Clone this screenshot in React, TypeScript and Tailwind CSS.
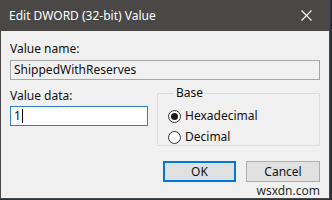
const font = { fontFamily: '"Noto Sans", "Open Sans", sans-serif' };

const Radio = ({ checked, label }: { checked?: boolean; label: string }) => (
  <label className="flex items-center gap-[4px] h-[16px]">
    <span className="flex items-center justify-center w-[13px] h-[13px] rounded-full border border-[#333333] bg-white">
      {checked && <span className="w-[7px] h-[7px] rounded-full bg-[#1a1a1a]" />}
    </span>
    <span>{label}</span>
  </label>
);

export default function App() {
  return (
    <div className="w-[332px] h-[200px] flex bg-[#2e3236] overflow-hidden text-[12px] text-[#111111]" style={font}>
      <div className="relative w-[330px] h-[199px] flex flex-col border-l border-r border-b border-[#4a4846]">
        <div className="h-[31px] flex items-center justify-between bg-[#4a4846] text-white">
          <span className="pl-[8px] text-[12px]">Edit DWORD (32-bit) Value</span>
          <span className="w-[46px] h-full flex items-center justify-center">
            <svg width="11" height="11" viewBox="0 0 11 11">
              <path d="M0.5 0.5 L10.5 10.5 M10.5 0.5 L0.5 10.5" stroke="#ffffff" strokeWidth="1.1" />
            </svg>
          </span>
        </div>

        <div className="flex-1 flex flex-col bg-[#f0f0f0] px-[9px] pt-[10px]">
          <div className="leading-[16px]">Value name:</div>
          <div className="mt-[3px] h-[20px] flex items-center px-[3px] border border-[#a5a5a5] bg-[#f0f0f0]">
            ShippedWithReserves
          </div>

          <div className="mt-[6px] flex gap-[9px]">
            <div className="w-[138px] flex flex-col">
              <div className="leading-[16px] pt-[2px]">Value data:</div>
              <div className="mt-[2px] h-[20px] flex items-center px-[3px] border border-[#2f7fc4] bg-white">
                <span>1</span>
                <span className="w-[1px] h-[14px] bg-black ml-[1px]" />
              </div>
            </div>
            <fieldset className="flex-1 h-[60px] border border-[#dcdcdc] rounded-[1px] px-[10px] pt-[8px]">
              <legend className="ml-[6px] px-[2px] leading-[14px]">Base</legend>
              <div className="flex flex-col gap-[5px]">
                <Radio checked label="Hexadecimal" />
                <Radio label="Decimal" />
              </div>
            </fieldset>
          </div>

          <div className="mt-[15px] flex justify-end gap-[10px]">
            <button className="w-[73px] h-[21px] border-2 border-[#0078d7] bg-[#e1e1e1] text-[12px]">OK</button>
            <button className="w-[74px] h-[21px] border border-[#adadad] bg-[#e1e1e1] text-[12px]">Cancel</button>
          </div>
        </div>

        <span className="absolute right-[9px] bottom-[1px] text-[12px] leading-[13px] text-[#2a2a2a] [text-shadow:0_0_2px_#ffffff]">
          wsxdn.com
        </span>
      </div>
    </div>
  );
}
